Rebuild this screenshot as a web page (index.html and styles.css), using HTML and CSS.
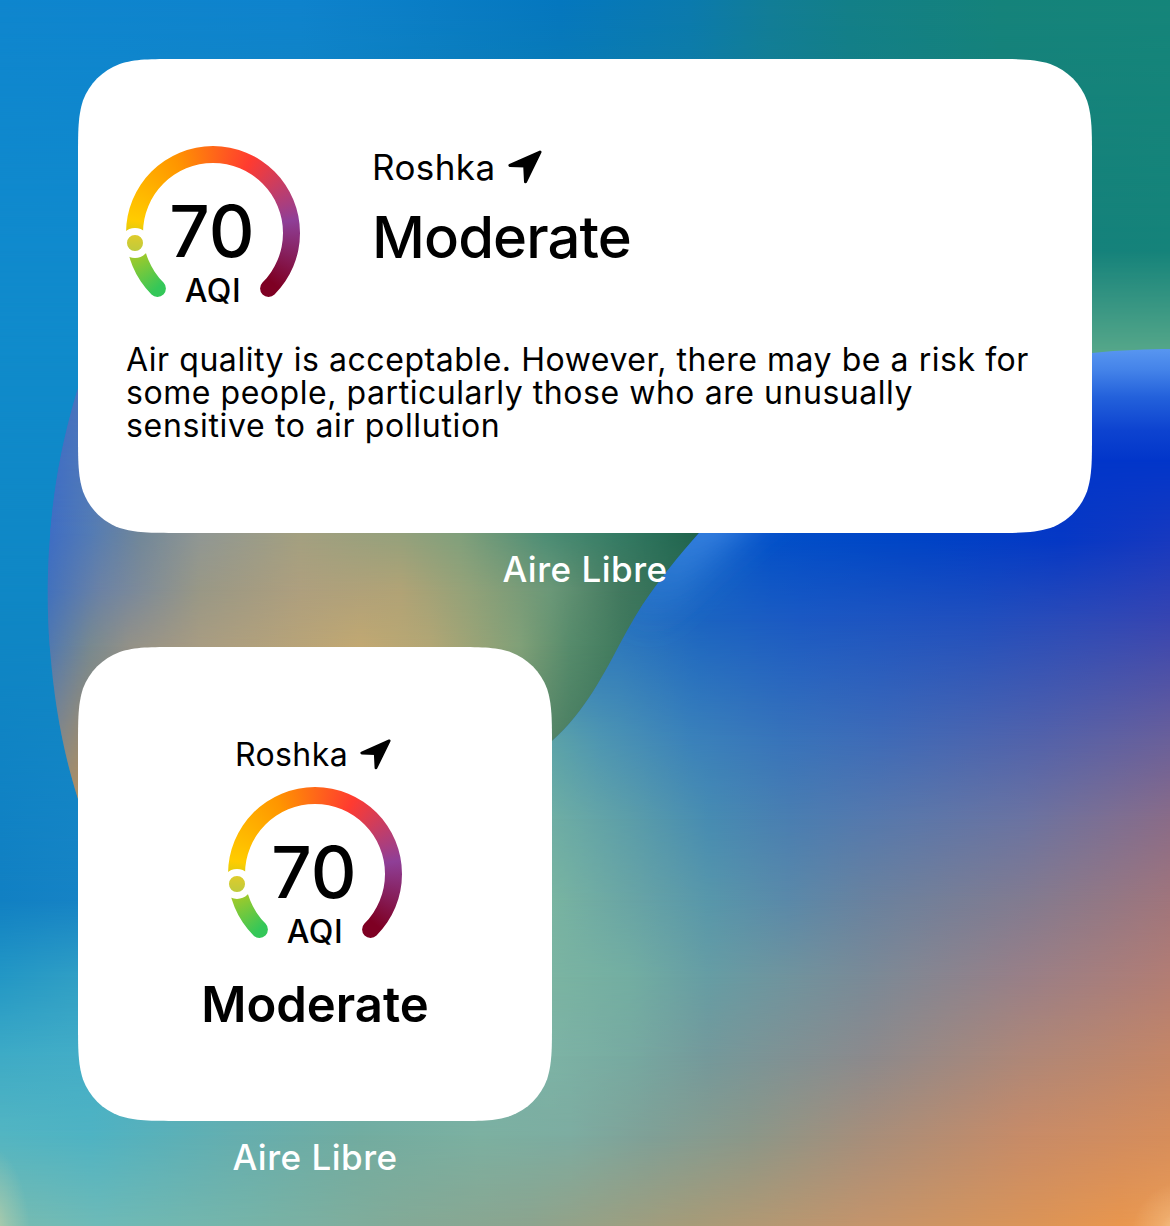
FILE: index.html
```
<!DOCTYPE html>
<html lang="en">
<head>
<meta charset="utf-8">
<title>Aire Libre widgets</title>
<link rel="stylesheet" href="styles.css">
</head>
<body>
<div class="wallpaper" aria-hidden="true">
  <div class="mesh sky"><i class="s1"></i><i class="s2"></i><i class="s3"></i><i class="s4"></i></div>
  <div class="mesh leaf"><i class="l1"></i><i class="l2"></i><i class="l3"></i><i class="l4"></i></div>
  <div class="mesh wave">
    <i class="w1"></i><i class="w2"></i><i class="w3"></i><i class="w4"></i><i class="w5"></i><i class="w6"></i><i class="w7"></i><i class="w8"></i><i class="w9"></i><i class="w10"></i>
    <svg class="rim" viewBox="0 0 1170 1226">
      <defs>
        <filter id="soft" filterUnits="userSpaceOnUse" x="500" y="350" width="450" height="500"><feGaussianBlur stdDeviation="20"/></filter>
        <linearGradient id="rimFade" gradientUnits="userSpaceOnUse" x1="630" y1="620" x2="730" y2="490">
          <stop offset="0" stop-color="#4f96ee" stop-opacity="0"/>
          <stop offset="1" stop-color="#5294f0"/>
        </linearGradient>
      </defs>
      <path d="M622 640C640 607 655 583 699 533Q740 490 800 450" fill="none" stroke="url(#rimFade)" stroke-width="42" filter="url(#soft)"/>
    </svg>
  </div>
</div>

<main class="home">
  <section class="slot">
    <article class="widget medium">
      <div class="top">
        <div class="gauge">
          <div class="ring"></div>
          <span class="marker"></span>
          <div class="reading"><span class="value">70</span><span class="unit">AQI</span></div>
        </div>
        <div class="summary">
          <div class="place"><span>Roshka</span>
            <svg class="arrow" viewBox="0 0 34 34"><path d="M32 2 1.9 15.4 16.7 16 17.5 31.8Z"/></svg>
          </div>
          <h2 class="level">Moderate</h2>
        </div>
      </div>
      <p class="advice">Air quality is acceptable. However, there may be a risk for<br>some people, particularly those who are unusually<br><span class="last">sensitive to air pollution</span></p>
    </article>
    <div class="caption">Aire Libre</div>
  </section>

  <section class="slot small-slot">
    <article class="widget small">
      <div class="place"><span>Roshka</span>
        <svg class="arrow" viewBox="0 0 34 34"><path d="M32 2 1.9 15.4 16.7 16 17.5 31.8Z"/></svg>
      </div>
      <div class="gauge">
        <div class="ring"></div>
        <span class="marker"></span>
        <div class="reading"><span class="value">70</span><span class="unit">AQI</span></div>
      </div>
      <h2 class="level">Moderate</h2>
    </article>
    <div class="caption">Aire Libre</div>
  </section>
</main>
</body>
</html>
```
FILE: styles.css
```
* { box-sizing: border-box; }
body {
  margin: 0;
  width: 1170px;
  height: 1226px;
  overflow: hidden;
  position: relative;
  font-family: Inter, "Liberation Sans", sans-serif;
  color: #000;
}

/* Wallpaper: each band blends one row of colours into the next */
.wallpaper, .mesh, .rim { position: absolute; inset: 0; }
.mesh { width: 1170px; height: 1226px; overflow: hidden; }
.rim { width: 1170px; height: 1226px; }
.mesh i { display: grid; background: var(--from); }
.mesh i::after {
  content: "";
  background: var(--to);
  -webkit-mask-image: linear-gradient(transparent, #000);
  mask-image: linear-gradient(transparent, #000);
}

.sky {
  --a: linear-gradient(90deg, #0f86ce 0, #0f83cd 300px, #0577bf 560px, #0b7aae 690px, #127d97 770px, #137f88 850px, #15837b 1000px, #15857a 1170px);
  --b: linear-gradient(90deg, #108acd 0, #108acd 100px, #15807c 1000px, #15837a 1170px);
  --c: linear-gradient(90deg, #108bcb 0, #108bcb 100px, #58a88a 1000px, #58a88a 1170px);
  --d: linear-gradient(90deg, #0f87c5, #0f87c5);
  --e: linear-gradient(90deg, #1180c3 0, #1683c5 78px, #1683c5);
}
.s1 { height: 250px; --from: var(--a); --to: var(--b); }
.s2 { height: 105px; --from: var(--b); --to: var(--c); }
.s3 { height: 245px; --from: var(--c); --to: var(--d); }
.s4 { height: 300px; --from: var(--d); --to: var(--e); }

.leaf {
  --a: linear-gradient(90deg, #3f6bc6 0, #3f6bc6 100px, #6c8398 300px, #1e6850 700px);
  --b: linear-gradient(90deg, #3f6ec4 50px, #537bb5 90px, #718799 140px, #909794 200px, #a3a080 300px, #94a17c 400px, #80a07c 460px, #4c8d75 545px, #347b64 620px, #1e624c 700px);
  --c: linear-gradient(90deg, #4472bc 50px, #6b82a5 100px, #999886 200px, #ae9f7e 300px, #b1a376 400px, #92a279 470px, #6b9878 550px, #42795f 620px, #2f6e56 670px);
  --d: linear-gradient(90deg, #5279af 50px, #788990 90px, #939188 130px, #a89c82 200px, #c1a872 360px, #b2a675 430px, #80a078 520px, #568b6b 570px, #3c775b 630px);
  --e: linear-gradient(90deg, #9a8e78 55px, #b18f5f 78px, #87a077 450px, #477b60 552px, #356d55 620px);
}
.leaf { clip-path: path("M700 300L110 300C85 360 70 410 61 455C48 520 45 590 50 650C55 710 64 755 79 802L560 802L760 533Z"); }
.l1 { height: 533px; --from: linear-gradient(#3f6bc6, #3f6bc6); --to: var(--b); }
.l2 { height: 57px; --from: var(--b); --to: var(--c); }
.l3 { height: 56px; --from: var(--c); --to: var(--d); }
.l4 { height: 154px; --from: var(--d); --to: var(--e); }

.wave {
  clip-path: path("M552 741C585 712 605 672 622 640C640 607 655 583 699 533C780 440 900 360 1092 353C1120 350 1150 349 1170 349L1170 1226L0 1226L0 900L400 900Z");
  --a: linear-gradient(#0236ca, #0236ca);
  --b: linear-gradient(90deg, #176bc8 680px, #0350c8 770px, #0045c6 900px, #0538c5 1060px, #1739bf 1170px);
  --c: linear-gradient(90deg, #2873be 620px, #1b64c1 700px, #1b59c3 800px, #214fbd 980px, #3745b1 1170px);
  --d: linear-gradient(90deg, #5ca3a8 552px, #4e96b2 600px, #3b82ba 690px, #3874ba 780px, #3f6bb7 880px, #5362aa 1040px, #6a609a 1170px);
  --e: linear-gradient(90deg, #6faea4 552px, #5c9ea9 629px, #478cb2 708px, #4a7eb1 790px, #5579ad 866px, #6b73a1 1024px, #8a6c88 1170px);
  --f: linear-gradient(90deg, #1180c3 0, #1683c5 78px, #79b4a1 552px, #69a5a5 629px, #5897aa 708px, #5a89a9 787px, #69829f 866px, #827b90 1024px, #a0757c 1170px);
  --g: linear-gradient(90deg, #2397c5 0, #309fc5 78px, #7bb4a2 552px, #73aea2 629px, #669da4 708px, #7a8a97 866px, #997f87 1024px, #b27d74 1170px);
  --h: linear-gradient(90deg, #3eabc6 0, #43adc7 78px, #7db3a5 552px, #77aaa1 629px, #74999b 708px, #8b8a8d 866px, #ae8778 1024px, #c48667 1170px);
  --i: linear-gradient(90deg, #53b5c2 0, #4fb3c3 90px, #65aeaf 235px, #72aca0 360px, #7cb0a1 480px, #7daca1 570px, #7fa097 650px, #8b9789 750px, #a68e7b 866px, #c78b68 1024px, #d68d5b 1170px);
  --j: linear-gradient(90deg, #78bbb0 0, #6ebab7 100px, #76b4a8 250px, #83aa97 400px, #8ca48e 530px, #a69b78 690px, #c4946b 866px, #dc9456 1040px, #e8964e 1120px, #ec9c54 1170px);
}
.mesh .w1 { height: 460px; background: linear-gradient(#5795f0 350px, #4483e9 370px, #2361db 397px, #0d43d0 430px, #0236ca 460px); }
.mesh .w1::after { content: none; }
.w2 { height: 80px; --from: var(--a); --to: var(--b); }
.w3 { height: 80px; --from: var(--b); --to: var(--c); }
.w4 { height: 120px; --from: var(--c); --to: var(--d); }
.w5 { height: 79px; --from: var(--d); --to: var(--e); }
.w6 { height: 81px; --from: var(--e); --to: var(--f); }
.w7 { height: 77px; --from: var(--f); --to: var(--g); }
.w8 { height: 79px; --from: var(--g); --to: var(--h); }
.w9 { height: 79px; --from: var(--h); --to: var(--i); }
.w10 { height: 91px; --from: var(--i); --to: var(--j); }
.wave::after {
  content: "";
  position: absolute;
  inset: 0;
  background:
    radial-gradient(ellipse 42px 90px at -12px 1236px, #d8d8a8c0, #d8d8a850 50%, #d8d8a800),
    radial-gradient(circle 55px at 1186px 1236px, #f8cf9c, #f8cf9c50 50%, #f8cf9c00);
}

.home {
  position: relative;
  display: flex;
  flex-direction: column;
  padding: 59px 78px 0;
}
.slot { width: 1014px; height: 588px; }
.small-slot { width: 474px; }
.widget { height: 474px; background: #fff; }
.medium {
  padding: 87px 48px 0;
  clip-path: path("M100.9 0H913.1C942.2 0 956.7 0 972.3 4.9C989.4 11.2 1002.8 24.6 1009.1 41.7C1014 57.3 1014 71.8 1014 100.9V373.1C1014 402.2 1014 416.7 1009.1 432.3C1002.8 449.4 989.4 462.8 972.3 469.1C956.7 474 942.2 474 913.1 474H100.9C71.8 474 57.3 474 41.7 469.1C24.6 462.8 11.2 449.4 4.9 432.3C0 416.7 0 402.2 0 373.1V100.9C0 71.8 0 57.3 4.9 41.7C11.2 24.6 24.6 11.2 41.7 4.9C57.3 0 71.8 0 100.9 0Z");
}
.small {
  display: flex;
  flex-direction: column;
  align-items: center;
  padding-top: 89px;
  clip-path: path("M100.9 0H373.1C402.2 0 416.7 0 432.3 4.9C449.4 11.2 462.8 24.6 469.1 41.7C474 57.3 474 71.8 474 100.9V373.1C474 402.2 474 416.7 469.1 432.3C462.8 449.4 449.4 462.8 432.3 469.1C416.7 474 402.2 474 373.1 474H100.9C71.8 474 57.3 474 41.7 469.1C24.6 462.8 11.2 449.4 4.9 432.3C0 416.7 0 402.2 0 373.1V100.9C0 71.8 0 57.3 4.9 41.7C11.2 24.6 24.6 11.2 41.7 4.9C57.3 0 71.8 0 100.9 0Z");
}
.top { display: flex; gap: 72px; }

.gauge { display: grid; position: relative; width: 174px; height: 174px; }
.ring, .reading { grid-area: 1 / 1; }
.ring {
  background: conic-gradient(from 225deg, #34c759 0, #ffcc00 54deg, #ff9500 108deg, #ff3b30 162deg, #8f3f97 216deg, #7e0023 265deg, #7e0023 315deg, #34c759 315deg);
  clip-path: path("M25.48 148.52A87 87 0 1 1 148.52 148.52A8.5 8.5 0 0 1 136.5 136.5A70 70 0 1 0 37.5 136.5A8.5 8.5 0 0 1 25.48 148.52Z");
}
.marker {
  position: absolute;
  left: -6px;
  top: 82px;
  width: 30px;
  height: 30px;
  border: 7px solid #fff;
  border-radius: 50%;
  background: linear-gradient(#dfcb2b, #bfcb3d) padding-box;
}
.reading {
  display: flex;
  flex-direction: column;
  align-items: center;
  padding-top: 49px;
}
.value { margin-left: -2px; font-size: 71px; line-height: 72px; font-weight: 470; letter-spacing: 0; }
.unit { margin-top: 6px; font-size: 32px; line-height: 36px; font-weight: 470; letter-spacing: 0.5px; }

.place { display: flex; align-items: center; letter-spacing: 0.4px; }
.arrow path { fill: #000; stroke: #000; stroke-width: 3; stroke-linejoin: round; }
.level { margin: 0; }

.medium .place { gap: 13px; font-size: 35px; line-height: 42px; }
.medium .arrow { width: 34px; height: 34px; }
.medium .level { margin-top: 14px; font-size: 58px; line-height: 70px; font-weight: 500; letter-spacing: -0.9px; }
.advice {
  margin: 23px 0 0;
  font-size: 32px;
  line-height: 33px;
  letter-spacing: 0.55px;
  white-space: nowrap;
}
.advice .last { letter-spacing: 0.67px; }

.small .place { gap: 12px; padding-right: 4px; font-size: 32px; line-height: 38px; }
.small .arrow { width: 31px; height: 31px; margin-bottom: 2px; }
.small .gauge { margin-top: 13px; }
.small .level { margin-top: 14px; font-size: 49px; line-height: 60px; font-weight: 600; }

.caption {
  padding-top: 16px;
  text-align: center;
  color: #fff;
  font-size: 35px;
  line-height: 40px;
  font-weight: 500;
  letter-spacing: 0.5px;
}
```
